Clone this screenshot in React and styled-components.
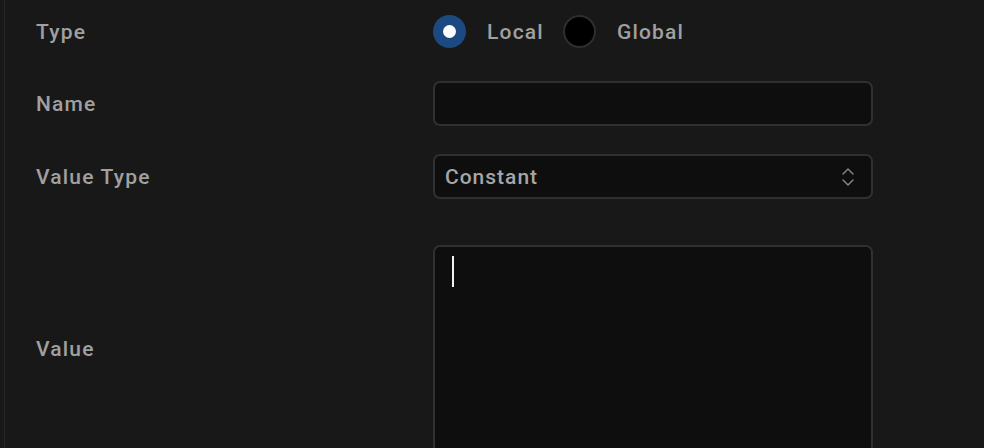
import React from "react";
import styled, { createGlobalStyle } from "styled-components";

const GlobalStyle = createGlobalStyle`
  html, body {
    margin: 0;
    padding: 0;
    background: #181818;
    overflow: hidden;
  }
  body {
    font-family: Roboto, "Liberation Sans", sans-serif;
  }
`;

const Panel = styled.div`
  margin-left: 4px;
  border-left: 1px solid #262626;
  background: #181818;
  height: 448px;
  padding: 15px 0 0 31px;
  box-sizing: border-box;
`;

const Row = styled.div`
  display: grid;
  grid-template-columns: 397px 440px;
  align-items: center;
  margin-top: ${(p) => p.$mt || 0}px;
`;

const Label = styled.div`
  color: #a0a0a0;
  font-size: 21px;
  font-weight: 500;
  letter-spacing: 1.2px;
`;

const RadioGroup = styled.div`
  display: flex;
  align-items: center;
  height: 33px;
`;

const RadioOption = styled.label`
  display: flex;
  align-items: center;
  gap: 21px;
  margin-right: 19px;
  color: #a0a0a0;
  font-size: 21px;
  font-weight: 500;
  letter-spacing: 1.2px;
`;

const RadioDot = styled.span`
  width: 33px;
  height: 33px;
  box-sizing: border-box;
  border-radius: 50%;
  display: flex;
  align-items: center;
  justify-content: center;
  background: ${(p) => (p.$checked ? "#1b4a82" : "#000")};
  border: ${(p) => (p.$checked ? "none" : "2px solid #2e2e2e")};
  &::after {
    content: "";
    display: ${(p) => (p.$checked ? "block" : "none")};
    width: 13px;
    height: 13px;
    border-radius: 50%;
    background: #fff;
  }
`;

const Field = styled.div`
  height: ${(p) => p.$h}px;
  box-sizing: border-box;
  border: 2px solid #303030;
  border-radius: 7px;
  background: #0e0e0e;
  display: flex;
  align-items: ${(p) => (p.$top ? "flex-start" : "center")};
  justify-content: space-between;
  padding: ${(p) => (p.$top ? "9px 17px" : "0 14px 0 10px")};
  color: #a6a6a6;
  font-size: 21px;
  font-weight: 500;
  letter-spacing: 1px;
`;

const Caret = styled.span`
  width: 2px;
  height: 31px;
  background: #f2f2f2;
`;

const UpDown = () => (
  <svg width="18" height="22" viewBox="0 0 18 22" fill="none" stroke="#8a8a8a" strokeWidth="1.4" strokeLinecap="round" strokeLinejoin="round">
    <path d="M4 8 L9 3 L14 8" />
    <path d="M4 14 L9 19 L14 14" />
  </svg>
);

export default function App() {
  return (
    <>
      <GlobalStyle />
      <Panel>
        <Row>
          <Label>Type</Label>
          <RadioGroup>
            <RadioOption>
              <RadioDot $checked />
              Local
            </RadioOption>
            <RadioOption>
              <RadioDot />
              Global
            </RadioOption>
          </RadioGroup>
        </Row>
        <Row $mt={33}>
          <Label>Name</Label>
          <Field $h={45} />
        </Row>
        <Row $mt={28}>
          <Label>Value Type</Label>
          <Field $h={45}>
            Constant
            <UpDown />
          </Field>
        </Row>
        <Row $mt={46}>
          <Label>Value</Label>
          <Field $h={208} $top>
            <Caret />
          </Field>
        </Row>
      </Panel>
    </>
  );
}
